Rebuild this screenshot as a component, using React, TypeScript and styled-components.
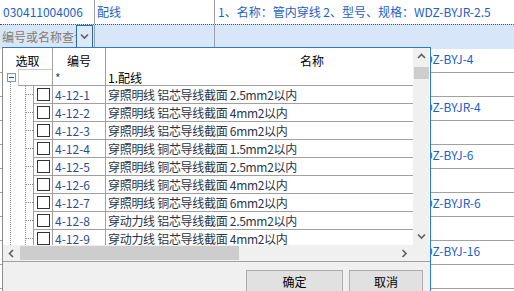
import React from 'react';
import styled, { createGlobalStyle } from 'styled-components';

const GlobalStyle = createGlobalStyle`
  html, body {
    margin: 0;
    padding: 0;
    background: #fff;
  }
  body {
    font-family: "Noto Sans CJK SC", "Noto Sans", sans-serif;
    font-size: 12px;
  }
  * {
    box-sizing: border-box;
  }
`;

const Screen = styled.div`
  position: relative;
  width: 514px;
  height: 291px;
  overflow: hidden;
  background: #fff;
`;

/* ---------- background table ---------- */

const Table = styled.div`
  display: flex;
  flex-direction: column;
`;

const TableRow = styled.div<{ $h: number; $filter?: boolean; $line?: boolean }>`
  display: grid;
  grid-template-columns: 95px 120px 1fr;
  height: ${p => p.$h}px;
  background: ${p => (p.$filter ? '#d7e6f8' : '#fff')};
  border-top: ${p => (p.$filter ? '1px dotted #505050' : 'none')};
  border-bottom: ${p => (p.$line ? '1px solid #a0a0a0' : 'none')};
`;

const Cell = styled.div<{ $last?: boolean; $pad?: number; $lh?: number }>`
  display: flex;
  align-items: flex-start;
  padding-left: ${p => p.$pad ?? 3}px;
  line-height: ${p => p.$lh ?? 20}px;
  color: #1b5fc9;
  white-space: nowrap;
  overflow: hidden;
  border-right: ${p => (p.$last ? 'none' : '1px solid #a0a0a0')};
`;

const FilterInput = styled.div`
  flex: 1;
  height: 23px;
  line-height: 23px;
  padding-left: 2px;
  color: #857a70;
  overflow: hidden;
  white-space: nowrap;
`;

const DropButton = styled.div`
  width: 17px;
  height: 23px;
  margin-right: 1px;
  border: 1px solid #2b6cb0;
  background: #dce9f7;
  display: flex;
  align-items: center;
  justify-content: center;
`;

/* ---------- popup ---------- */

const Popup = styled.div`
  position: absolute;
  left: 2px;
  top: 47px;
  width: 429px;
  height: 250px;
  border: 1px solid #2a7bd0;
  border-left-color: #8c8c8c;
  background: #f0f0f0;
  display: flex;
  flex-direction: column;
`;

const GridPane = styled.div`
  display: flex;
  height: 197px;
  background: #fff;
  padding-right: 1px;
`;

const Viewport = styled.div`
  flex: 1;
  overflow: hidden;
  color: #303846;
`;

const Header = styled.div`
  display: grid;
  grid-template-columns: 15px 35px 53px 412px;
  grid-template-rows: 21px 17px;
  color: #000;
`;

const HeadLabel = styled.div<{ $span?: string; $align?: string; $border?: boolean }>`
  grid-column: ${p => p.$span ?? 'auto'};
  text-align: ${p => p.$align ?? 'center'};
  line-height: 21px;
  padding-top: 2px;
  border-right: ${p => (p.$border ? '1px solid #a0a0a0' : 'none')};
`;

const GroupCell = styled.div<{ $top?: boolean; $left?: boolean; $right?: boolean; $color?: string }>`
  line-height: 14px;
  padding-left: 2px;
  padding-top: 2px;
  color: ${p => p.$color ?? '#000'};
  border-bottom: 1px solid #a0a0a0;
  border-top: ${p => (p.$top ? '1px solid #c8c8c8' : 'none')};
  border-left: ${p => (p.$left ? '1px solid #c8c8c8' : 'none')};
  border-right: ${p => (p.$right ? '1px solid #a0a0a0' : 'none')};
`;

const ToggleCell = styled.div`
  padding: 4px 0 0 4px;
  background: repeating-linear-gradient(#8a8a8a 0 1px, transparent 1px 2px) 7px 13px / 1px 100% no-repeat;
`;

const DataRow = styled.div`
  display: grid;
  grid-template-columns: 30px 20px 53px 412px;
  height: 18px;
`;

const TreeCell = styled.div`
  background:
    repeating-linear-gradient(#8a8a8a 0 1px, transparent 1px 2px) 7px 0 / 1px 100% no-repeat,
    repeating-linear-gradient(#8a8a8a 0 1px, transparent 1px 2px) 22px 0 / 1px 100% no-repeat,
    repeating-linear-gradient(to right, #8a8a8a 0 1px, transparent 1px 2px) 23px 8px / 8px 1px no-repeat;
`;

const CheckCell = styled.div`
  display: flex;
  align-items: center;
  justify-content: center;
  border-left: 1px solid #a0a0a0;
  border-right: 1px solid #a0a0a0;
  border-bottom: 1px solid #a0a0a0;
`;

const CheckBox = styled.div`
  width: 13px;
  height: 13px;
  border: 1px solid #333;
  background: #fff;
`;

const TextCell = styled.div<{ $color?: string; $right?: boolean; $tight?: boolean }>`
  line-height: 17px;
  padding-left: 2px;
  white-space: nowrap;
  letter-spacing: ${p => (p.$tight ? '-0.3px' : '0')};
  color: ${p => p.$color ?? '#2c3444'};
  border-bottom: 1px solid #a0a0a0;
  border-right: ${p => (p.$right ? '1px solid #a0a0a0' : 'none')};
`;

const VScroll = styled.div`
  width: 16px;
  background: #f0f0f0;
  display: flex;
  flex-direction: column;
  align-items: center;
`;

const ArrowBox = styled.div<{ $w?: number; $h?: number }>`
  width: ${p => p.$w ?? 16}px;
  height: ${p => p.$h ?? 17}px;
  display: flex;
  align-items: center;
  justify-content: center;
  flex-shrink: 0;
`;

const VThumb = styled.div`
  width: 15px;
  height: 12px;
  margin-top: 2px;
  background: #cdcdcd;
`;

const Spacer = styled.div`
  flex: 1;
`;

const HScrollRow = styled.div`
  display: flex;
  height: 16px;
  background: #f0f0f0;
  border-bottom: 1px solid #a0a0a0;
  box-sizing: content-box;
`;

const HScroll = styled.div`
  width: 410px;
  display: flex;
  align-items: center;
`;

const HThumb = styled.div`
  width: 219px;
  height: 14px;
  background: #cdcdcd;
`;

const Footer = styled.div`
  flex: 1;
  display: flex;
  justify-content: flex-end;
  align-items: flex-start;
  gap: 6px;
  padding: 8px 7px 0 0;
`;

const Button = styled.div<{ $w: number }>`
  width: ${p => p.$w}px;
  height: 23px;
  line-height: 21px;
  text-align: center;
  color: #000;
  background: #e1e1e1;
  border: 1px solid #adadad;
`;

/* ---------- icons ---------- */

const Chevron = ({ dir }: { dir: 'up' | 'down' | 'left' | 'right' }) => {
  const pts = {
    up: '1,5 4.5,1.5 8,5',
    down: '1,1.5 4.5,5 8,1.5',
    left: '5,1 1.5,4.5 5,8',
    right: '1.5,1 5,4.5 1.5,8',
  }[dir];
  const horiz = dir === 'up' || dir === 'down';
  return (
    <svg width={horiz ? 9 : 7} height={horiz ? 7 : 9} viewBox={horiz ? '0 0 9 7' : '0 0 7 9'}>
      <polyline points={pts} fill="none" stroke="#606060" strokeWidth="1.6" />
    </svg>
  );
};

const Minus = () => (
  <svg width="9" height="9" viewBox="0 0 9 9" style={{ display: 'block' }}>
    <rect x="0.5" y="0.5" width="8" height="8" fill="#f4f6f9" stroke="#8a96a8" />
    <line x1="2" y1="4.5" x2="7" y2="4.5" stroke="#2a4a8a" />
  </svg>
);

const prefix = '1、名称：管内穿线 2、型号、规格：';
const specs = ['WDZ-BYJ-4', '', 'WDZ-BYJR-4', '', 'WDZ-BYJ-6', '', 'WDZ-BYJR-6', '', 'WDZ-BYJ-16', ''];

const items = [
  ['4-12-1', '穿照明线 铝芯导线截面 2.5mm2以内'],
  ['4-12-2', '穿照明线 铝芯导线截面 4mm2以内'],
  ['4-12-3', '穿照明线 铝芯导线截面 6mm2以内'],
  ['4-12-4', '穿照明线 铜芯导线截面 1.5mm2以内'],
  ['4-12-5', '穿照明线 铜芯导线截面 2.5mm2以内'],
  ['4-12-6', '穿照明线 铜芯导线截面 4mm2以内'],
  ['4-12-7', '穿照明线 铜芯导线截面 6mm2以内'],
  ['4-12-8', '穿动力线 铝芯导线截面 2.5mm2以内'],
  ['4-12-9', '穿动力线 铝芯导线截面 4mm2以内'],
];

const App: React.FC = () => {
  return (
    <Screen>
      <GlobalStyle />
      <Table>
        <TableRow $h={24}>
          <Cell $lh={24}>030411004006</Cell>
          <Cell $lh={24} $pad={2}>配线</Cell>
          <Cell $lh={24} $last>{prefix}WDZ-BYJR-2.5</Cell>
        </TableRow>
        <TableRow $h={25} $filter>
          <Cell $pad={0}>
            <FilterInput>编号或名称查询</FilterInput>
            <DropButton>
              <Chevron dir="down" />
            </DropButton>
          </Cell>
          <Cell />
          <Cell $last />
        </TableRow>
        {specs.map((s, i) => (
          <TableRow key={i} $h={24} $line>
            <Cell />
            <Cell />
            <Cell $last>{s ? prefix + s : ''}</Cell>
          </TableRow>
        ))}
      </Table>

      <Popup>
        <GridPane>
          <Viewport>
            <Header>
              <HeadLabel $span="1 / 3" $border>选取</HeadLabel>
              <HeadLabel $border>编号</HeadLabel>
              <HeadLabel>名称</HeadLabel>
              <ToggleCell>
                <Minus />
              </ToggleCell>
              <GroupCell $top $left $right />
              <GroupCell $right $color="#2b4c90">*</GroupCell>
              <GroupCell>1.配线</GroupCell>
            </Header>
            {items.map(([code, name]) => (
              <DataRow key={code}>
                <TreeCell />
                <CheckCell>
                  <CheckBox />
                </CheckCell>
                <TextCell $right $color="#2b4c90">{code}</TextCell>
                <TextCell $tight>{name}</TextCell>
              </DataRow>
            ))}
          </Viewport>
          <VScroll>
            <ArrowBox>
              <Chevron dir="up" />
            </ArrowBox>
            <VThumb />
            <Spacer />
            <ArrowBox>
              <Chevron dir="down" />
            </ArrowBox>
          </VScroll>
        </GridPane>
        <HScrollRow>
          <HScroll>
            <ArrowBox $w={17} $h={16}>
              <Chevron dir="left" />
            </ArrowBox>
            <HThumb />
            <Spacer />
            <ArrowBox $w={17} $h={16}>
              <Chevron dir="right" />
            </ArrowBox>
          </HScroll>
        </HScrollRow>
        <Footer>
          <Button $w={97}>确定</Button>
          <Button $w={74}>取消</Button>
        </Footer>
      </Popup>
    </Screen>
  );
};

export default App;
